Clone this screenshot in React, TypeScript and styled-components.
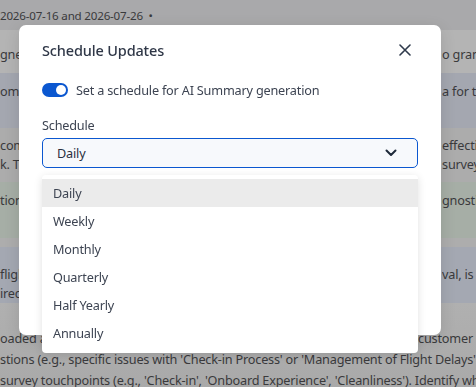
import styled, { createGlobalStyle } from "styled-components";

const GlobalStyle = createGlobalStyle`
  html, body {
    margin: 0;
    padding: 0;
    width: 476px;
    height: 387px;
    overflow: hidden;
    font-family: "Noto Sans", "Liberation Sans", sans-serif;
    letter-spacing: -0.2px;
    background: #adadad;
  }
`;

type Band = {
  bg: string;
  height: number;
  pad: number;
  size?: number;
  split?: number;
  lines: [string, string][];
};

const bands: Band[] = [
  { bg: "#a9a9ab", height: 30, pad: 6, size: 11.6, lines: [["2026-07-16 and 2026-07-26 \u00a0•", ""]] },
  { bg: "#b4b4b4", height: 43, pad: 15, lines: [["gned to measure how passengers", "o grant"]] },
  { bg: "#a4a7b0", height: 55, pad: 9, lines: [["ome of the key data", "a for the"]] },
  { bg: "#acacac", height: 54, pad: 8, lines: [["comments on overall", "effectiveness"], ["k. The survey", "survey"]] },
  { bg: "#a6aea6", height: 56, pad: 9, lines: [["tion of the diagnostic", "gnostic"]] },
  { bg: "#adadad", height: 9, pad: 0, lines: [] },
  { bg: "#a4a8b2", height: 56, pad: 18, lines: [["flight experience", "val, is a"], ["irect feedback", ""]] },
];

const Schedule = () => {
  const options = ["Daily", "Weekly", "Monthly", "Quarterly", "Half Yearly", "Annually"];
  return (
    <>
      <GlobalStyle />
      <Page>
        {bands.map((b, i) => (
          <BandRow key={i} $bg={b.bg} $height={b.height} $pad={b.pad} $size={b.size ?? 12.7}>
            {b.lines.map(([left, right], j) => (
              <Line key={j} $split={b.split ?? 442}>
                <Clip>{left}</Clip>
                <Clip>{right}</Clip>
              </Line>
            ))}
          </BandRow>
        ))}
        <Bottom>
          <Line $split={418}>
            <Clip>oaded and analysed by the team to find</Clip>
            <Clip>customer loyalty</Clip>
          </Line>
          <FullLine>stions (e.g., specific issues with 'Check-in Process' or 'Management of Flight Delays'</FullLine>
          <FullLine>survey touchpoints (e.g., 'Check-in', 'Onboard Experience', 'Cleanliness'). Identify which</FullLine>
        </Bottom>
      </Page>

      <Modal>
        <Header>
          <Title>Schedule Updates</Title>
          <CloseButton aria-label="Close">
            <svg width="12" height="12" viewBox="0 0 12 12">
              <path d="M1 1 L11 11 M11 1 L1 11" stroke="#2f3a4c" strokeWidth="1.6" strokeLinecap="round" />
            </svg>
          </CloseButton>
        </Header>
        <ToggleRow>
          <Toggle>
            <Knob />
          </Toggle>
          <ToggleLabel>Set a schedule for AI Summary generation</ToggleLabel>
        </ToggleRow>
        <FieldLabel>Schedule</FieldLabel>
        <SelectWrap>
          <SelectBox>
            <span>Daily</span>
            <svg width="12" height="8" viewBox="0 0 12 8">
              <path d="M1.5 1.5 L6 6 L10.5 1.5" stroke="#1f2a3a" strokeWidth="2" fill="none" strokeLinecap="round" strokeLinejoin="round" />
            </svg>
          </SelectBox>
          <Menu>
            {options.map((o, i) => (
              <MenuItem key={o} $active={i === 0}>{o}</MenuItem>
            ))}
          </Menu>
        </SelectWrap>
      </Modal>
    </>
  );
};

export default Schedule;

const Page = styled.div`
  width: 476px;
  height: 387px;
  display: flex;
  flex-direction: column;
  color: #3a3a3c;
  font-size: 12.7px;
  line-height: 19px;
`;

const BandRow = styled.div<{ $bg: string; $height: number; $pad: number; $size: number }>`
  background: ${(p) => p.$bg};
  height: ${(p) => p.$height}px;
  padding-top: ${(p) => p.$pad}px;
  font-size: ${(p) => p.$size}px;
  box-sizing: border-box;
  flex-shrink: 0;
`;

const Line = styled.div<{ $split: number }>`
  display: grid;
  grid-template-columns: ${(p) => p.$split}px 1fr;
  white-space: nowrap;
`;

const Clip = styled.span`
  overflow: hidden;
`;

const Bottom = styled.div`
  flex: 1;
  padding-top: 25px;
  background: linear-gradient(180deg, #b0b0b0 0%, #a9a9a9 100%);
  line-height: 21px;
`;

const FullLine = styled.div`
  white-space: nowrap;
`;

const Modal = styled.div`
  position: fixed;
  top: 25px;
  left: 19px;
  width: 422px;
  height: 310px;
  box-sizing: border-box;
  padding: 14px 23px 0;
  background: #ffffff;
  border-radius: 7px;
  box-shadow: 0 4px 16px rgba(0, 0, 0, 0.12);
  color: #3b4252;
`;

const Header = styled.div`
  display: flex;
  align-items: center;
  justify-content: space-between;
  height: 22px;
`;

const Title = styled.h2`
  margin: 0;
  font-size: 14.5px;
  letter-spacing: -0.15px;
  font-weight: 500;
  color: #2f3747;
`;

const CloseButton = styled.button`
  width: 24px;
  height: 24px;
  margin-right: 1px;
  display: flex;
  align-items: center;
  justify-content: center;
  border: none;
  background: none;
  padding: 0;
`;

const ToggleRow = styled.div`
  margin-top: 20px;
  height: 18px;
  display: flex;
  align-items: center;
  gap: 8px;
`;

const Toggle = styled.div`
  width: 26px;
  height: 14px;
  border-radius: 7px;
  background: #0b57d0;
  display: flex;
  align-items: center;
  justify-content: flex-end;
  padding: 0 2px;
  box-sizing: border-box;
`;

const Knob = styled.div`
  width: 10px;
  height: 10px;
  border-radius: 50%;
  background: #ffffff;
`;

const ToggleLabel = styled.span`
  font-size: 12.7px;
  color: #3d4452;
`;

const FieldLabel = styled.div`
  margin-top: 17px;
  font-size: 12.7px;
  line-height: 18px;
  color: #3d4452;
`;

const SelectWrap = styled.div`
  position: relative;
  margin-top: 4px;
`;

const SelectBox = styled.div`
  height: 30px;
  box-sizing: border-box;
  border: 1px solid #0b57d0;
  border-radius: 5px;
  background: #f7f9fc;
  display: flex;
  align-items: center;
  justify-content: space-between;
  padding: 0 20px 0 14px;
  font-size: 12.7px;
  color: #2a3040;
`;

const Menu = styled.div`
  position: absolute;
  top: calc(100% + 7px);
  left: 0;
  right: 0;
  padding: 4px 0 6px;
  background: #ffffff;
  border-radius: 4px;
  box-shadow: 0 2px 8px rgba(0, 0, 0, 0.12);
`;

const MenuItem = styled.div<{ $active: boolean }>`
  height: 28px;
  display: flex;
  align-items: center;
  padding-left: 11px;
  font-size: 12.7px;
  color: #3d4452;
  background: ${(p) => (p.$active ? "#ebebeb" : "transparent")};
`;
